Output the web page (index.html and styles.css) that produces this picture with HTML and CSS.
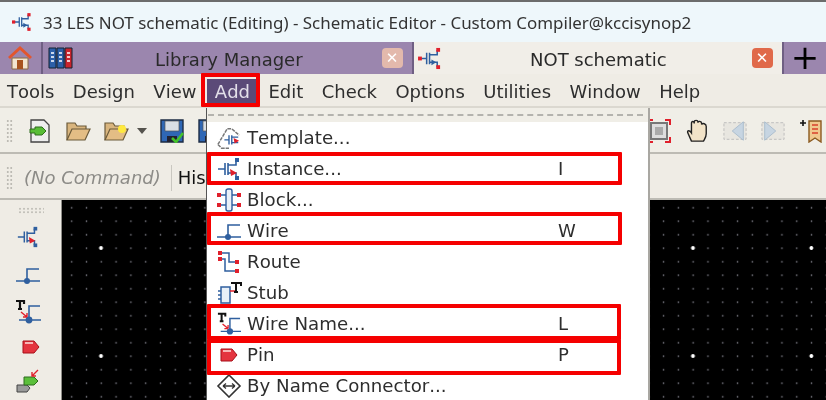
FILE: index.html
```html
<!DOCTYPE html>
<html lang="en">
<head>
<meta charset="utf-8">
<title>Schematic Editor</title>
<link rel="stylesheet" href="styles.css">
</head>
<body>
<svg class="defs" width="0" height="0" aria-hidden="true">
  <symbol id="inst" viewBox="0 0 26 24">
    <path d="M2 12H9M9 6V18M12 6V18M12 8H20V3M12 16H20V21" fill="none" stroke="#2f5f9f" stroke-width="1.6"/>
    <path d="M14 13l5 3-5 3z" fill="#2f5f9f"/>
    <rect x="0" y="10" width="4" height="4" fill="#e0202c"/><rect x="19" y="1" width="4" height="4" fill="#e0202c"/><rect x="19" y="19" width="4" height="4" fill="#e0202c"/>
  </symbol>
  <symbol id="inst2" viewBox="0 0 26 24">
    <path d="M2 12H9M9 6V18M12 6V18M12 8H20V3M12 16H20V21" fill="none" stroke="#2f5f9f" stroke-width="1.6"/>
    <path d="M14 12l7 4-6 3z" fill="#e0202c"/>
    <rect x="19" y="1" width="4" height="4" fill="#2f5f9f"/><rect x="19" y="19" width="4" height="4" fill="#2f5f9f"/>
  </symbol>
  <symbol id="wire" viewBox="0 0 26 20">
    <path d="M1 16H25M12 16V4H24" fill="none" stroke="#2f5f9f" stroke-width="1.6"/>
    <circle cx="12" cy="16" r="3" fill="#2f5f9f"/>
  </symbol>
  <symbol id="wname" viewBox="0 0 26 26">
    <path d="M1 2H9V5M5 2V10M3 10H7" fill="none" stroke="#111" stroke-width="2.2"/>
    <path d="M4 24H26M14 24V10H25" fill="none" stroke="#2f5f9f" stroke-width="1.6" transform="translate(0 -3)"/>
    <circle cx="14" cy="21" r="3.4" fill="#2f5f9f"/>
    <path d="M6 13l6 5M12 18l-4 0M12 18l0-4" fill="none" stroke="#e0202c" stroke-width="1.4"/>
  </symbol>
  <symbol id="pin" viewBox="0 0 18 14">
    <path d="M1 1H12L17 7 12 13H1z" fill="#e4343f" stroke="#a80f18"/>
    <path d="M3 3H11" stroke="#f7b5b5" stroke-width="2"/>
  </symbol>
  <symbol id="conn" viewBox="0 0 26 26">
    <path d="M8 17H18L21 20 18 24H8z" fill="#9a9a9a" stroke="#444" transform="translate(-6 -1)"/>
    <path d="M9 8H19L23 12 19 16H9z" fill="#5bbf3a" stroke="#2f6d1e"/>
    <path d="M23 1L17 7M17 3V7H21" fill="none" stroke="#e0202c" stroke-width="1.4"/>
  </symbol>
  <symbol id="tmpl" viewBox="0 0 28 26">
    <path d="M2 20L12 3 17 3 25 10M2 20L6 24H14" fill="none" stroke="#777" stroke-width="1.6" stroke-dasharray="4 1"/>
    <path d="M9 15H14M14 10V20M17 10V20M17 12H24M17 18H24" fill="none" stroke="#2f5f9f" stroke-width="1.5"/>
    <path d="M19 13l6 3-5 3z" fill="#e0202c"/>
  </symbol>
  <symbol id="block" viewBox="0 0 26 24">
    <rect x="10" y="1" width="6" height="22" rx="2" fill="#eaf1f8" stroke="#2f5f9f" stroke-width="1.4"/>
    <path d="M3 7H10M3 17H10M16 7H23M16 17H23" stroke="#2f5f9f" stroke-width="1.4"/>
    <path d="M1 5h4v4H1zM1 15h4v4H1zM21 5h4v4h-4zM21 15h4v4h-4z" fill="#e0202c"/>
  </symbol>
  <symbol id="route" viewBox="0 0 24 24">
    <path d="M3 3H12V12H20M3 9H8V21H20" fill="none" stroke="#2f5f9f" stroke-width="1.5"/>
    <path d="M1 1h4v4H1zM1 7h4v4H1zM18 10h4v4h-4zM18 19h4v4h-4z" fill="#e0202c"/>
  </symbol>
  <symbol id="stub" viewBox="0 0 26 24">
    <rect x="5" y="6" width="9" height="16" fill="#e8f0f8" stroke="#2f5f9f" stroke-width="1.5"/>
    <path d="M2 10H5M2 14H5M2 18H5" stroke="#2f5f9f" stroke-width="1.5"/>
    <path d="M14 10H20" stroke="#e0202c" stroke-width="1.5"/>
    <path d="M15 2H25V5M20 2V11M18 11H22" fill="none" stroke="#111" stroke-width="2"/>
  </symbol>
  <symbol id="byname" viewBox="0 0 24 24">
    <path d="M12 1L23 12 12 23 1 12z" fill="#fff" stroke="#333" stroke-width="1.6"/>
    <path d="M6 12H18M6 12l3-2.5M6 12l3 2.5M18 12l-3-2.5M18 12l-3 2.5" fill="none" stroke="#333" stroke-width="1.3"/>
  </symbol>
  <symbol id="folder" viewBox="0 0 26 22">
    <path d="M2 20V3H10L12 6H21V9" fill="#d9b57e" stroke="#6b5a3a" stroke-width="1.2"/>
    <path d="M2 20L7 9H25L20 20z" fill="#e3bd85" stroke="#6b5a3a" stroke-width="1.2"/>
  </symbol>
  <symbol id="floppy" viewBox="0 0 24 24">
    <path d="M1 1H23V23H1z" fill="#2f67b5" stroke="#1d2c44" stroke-width="1.4"/>
    <path d="M5 2H19V12H5z" fill="#d9dfe6" stroke="#555" stroke-width=".7"/>
    <path d="M7 17H17V23H7z" fill="#223"/>
  </symbol>
</svg>

<div class="app">
  <header class="titlebar">
    <svg class="ti-title"><use href="#inst"/></svg>
    <span class="title-text">33 LES NOT schematic (Editing) - Schematic Editor - Custom Compiler@kccisynop2</span>
  </header>

  <nav class="tabs">
    <div class="tab-home">
      <svg class="home-ico" viewBox="0 0 24 24">
        <path d="M1 12L12 2 23 12" fill="none" stroke="#e2562e" stroke-width="3"/>
        <path d="M4 12H20V23H4z" fill="#f3e6cf" stroke="#8b6b45"/>
        <path d="M9 14H15V23H9z" fill="#a8541f"/>
      </svg>
    </div>
    <div class="tab-lib">
      <svg class="lib-ico" viewBox="0 0 26 22">
        <path d="M1 1H8V21H1z" fill="#2c5fa8" stroke="#123"/>
        <path d="M9 1H16V21H9z" fill="#2c5fa8" stroke="#123"/>
        <path d="M17 1H24V21H17z" fill="#c9242c" stroke="#123"/>
        <path d="M3 6H6M3 10H6M3 14H6M11 6H14M11 10H14M11 14H14M19 6H22M19 10H22M19 14H22" stroke="#fff" stroke-width="1.3"/>
      </svg>
      <span class="tab-label lib-label">Library Manager</span>
      <span class="tab-close close-dim">✕</span>
    </div>
    <div class="tab-sch">
      <svg class="ti-tab"><use href="#inst"/></svg>
      <span class="tab-label sch-label">NOT schematic</span>
      <span class="tab-close close-on">✕</span>
    </div>
    <div class="tab-plus">+</div>
  </nav>

  <div class="menubar">
    <span>Tools</span><span>Design</span><span>View</span><span class="active">Add</span><span>Edit</span><span>Check</span><span>Options</span><span>Utilities</span><span>Window</span><span>Help</span>
  </div>

  <div class="toolbar">
    <div class="grip"></div>
    <svg class="tool t-doc" viewBox="0 0 22 24">
      <path d="M2 1H15L20 6V23H2z" fill="#eee" stroke="#444" stroke-width="1.3"/>
      <path d="M1 10H6V8H13L17 12 13 16H6V14H1z" fill="#58bd37" stroke="#2f6d1e"/>
    </svg>
    <svg class="tool t-fold"><use href="#folder"/></svg>
    <svg class="tool t-fold2" viewBox="0 0 26 22">
      <use href="#folder"/>
      <circle cx="19" cy="9" r="4" fill="#ffe93f"/>
    </svg>
    <span class="caret"></span>
    <svg class="tool t-flop" viewBox="0 0 24 24">
      <use href="#floppy"/>
      <path d="M12 19l4 4 7-9" fill="none" stroke="#44c22b" stroke-width="2.6"/>
    </svg>
    <svg class="tool t-flop2"><use href="#floppy"/></svg>
    <div class="tool-right">
      <svg class="tool" viewBox="0 0 24 24">
        <path d="M4 4H20V20H4z" fill="#ddd" stroke="#777" stroke-width="2"/>
        <path d="M8 8H16V16H8z" fill="#aaa"/>
        <path d="M1 6V1H6M18 1H23V6M23 18V23H18M6 23H1V18" fill="none" stroke="#e0202c" stroke-width="2"/>
      </svg>
      <svg class="tool" viewBox="0 0 26 26">
        <path d="M7 24L3 15C2 12 5 12 7 15V5C7 2 10 2 10 5V3C10 1 14 1 14 3V4C14 2 18 2 18 5V6C19 4 23 5 23 8V16C23 20 21 22 20 24z" fill="#f2e3c8" stroke="#222" stroke-width="1.5"/>
      </svg>
      <svg class="tool" viewBox="0 0 26 22">
        <path d="M1 2H25V20H1z" fill="#e8e6e0" stroke="#bbb" stroke-dasharray="3 2"/>
        <path d="M22 1V21L10 11z" fill="#c7d5e2" stroke="#a9bccc"/>
      </svg>
      <svg class="tool" viewBox="0 0 26 22">
        <path d="M1 2H25V20H1z" fill="#e8e6e0" stroke="#bbb" stroke-dasharray="3 2"/>
        <path d="M4 1V21L16 11z" fill="#c7d5e2" stroke="#a9bccc"/>
      </svg>
      <svg class="tool" viewBox="0 0 24 24">
        <path d="M1 4H7M4 1V7" stroke="#111" stroke-width="1.6"/>
        <path d="M10 2H22V23L16 19 10 23z" fill="#f0c88e" stroke="#8a5a20" stroke-width="1.4"/>
        <path d="M13 6H19M13 10H19M13 14H19" stroke="#d8402c" stroke-width="1.6"/>
      </svg>
    </div>
  </div>

  <div class="cmdbar">
    <div class="grip"></div>
    <span class="cmd">(No Command)</span>
    <span class="cmd-sep"></span>
    <span class="hist">History</span>
  </div>

  <main class="work">
    <aside class="side">
      <div class="grip-h"></div>
      <svg class="s-inst"><use href="#inst2"/></svg>
      <svg class="s-wire"><use href="#wire"/></svg>
      <svg class="s-name"><use href="#wname"/></svg>
      <svg class="s-pin"><use href="#pin"/></svg>
      <svg class="s-conn"><use href="#conn"/></svg>
    </aside>
    <div class="canvas"></div>
  </main>

  <div class="dropdown">
    <div class="tearoff"></div>
    <div class="item"><svg class="mi"><use href="#tmpl"/></svg><span class="label">Template...</span></div>
    <div class="item"><svg class="mi"><use href="#inst2"/></svg><span class="label">Instance...</span><span class="key">I</span></div>
    <div class="item"><svg class="mi"><use href="#block"/></svg><span class="label">Block...</span></div>
    <div class="item"><svg class="mi"><use href="#wire"/></svg><span class="label">Wire</span><span class="key">W</span></div>
    <div class="item"><svg class="mi"><use href="#route"/></svg><span class="label">Route</span></div>
    <div class="item"><svg class="mi"><use href="#stub"/></svg><span class="label">Stub</span></div>
    <div class="item"><svg class="mi"><use href="#wname"/></svg><span class="label">Wire Name...</span><span class="key">L</span></div>
    <div class="item"><svg class="mi mi-pin"><use href="#pin"/></svg><span class="label">Pin</span><span class="key">P</span></div>
    <div class="item"><svg class="mi"><use href="#byname"/></svg><span class="label">By Name Connector...</span></div>
  </div>

  <div class="mark m-add"></div>
  <div class="mark m-inst"></div>
  <div class="mark m-wire"></div>
  <div class="mark m-name"></div>
  <div class="mark m-pin"></div>
</div>
</body>
</html>
```

FILE: styles.css
```css
* { box-sizing: border-box; }
html, body { margin: 0; padding: 0; background: #000; }
.defs { position: absolute; }
svg { display: block; flex: none; }

.app {
  position: relative;
  width: 826px;
  height: 400px;
  overflow: hidden;
  display: flex;
  flex-direction: column;
  font-family: "DejaVu Sans", sans-serif;
  font-size: 18px;
  font-kerning: none;
  color: #2e2e2e;
  filter: blur(0.35px);
}

/* window title */
.titlebar {
  height: 42px;
  flex: none;
  display: flex;
  align-items: center;
  padding-left: 12px;
  background: #eef7fb;
  border-top: 2px solid #6c6c6c;
}
.ti-title { width: 21px; height: 20px; margin-right: 10px; }
.title-text { font-family: "Noto Sans", sans-serif; font-size: 16.95px; font-kerning: normal; color: #333; white-space: nowrap; }

/* tabs */
.tabs { height: 32px; flex: none; display: flex; background: #f1eee8; }
.tab-home {
  width: 43px;
  background: #9b86ae;
  border-right: 2px solid #6f5f83;
  display: flex;
  align-items: center;
  padding-left: 8px;
}
.home-ico { width: 24px; height: 24px; }
.tab-lib {
  width: 371px;
  background: #9b86ae;
  border-right: 2px solid #6f5f83;
  display: flex;
  align-items: center;
  padding-left: 5px;
}
.lib-ico { width: 26px; height: 22px; }
.tab-label { white-space: nowrap; color: #2a2a2a; padding-top: 2px; }
.lib-label { margin-left: 81px; }
.tab-close {
  width: 21px;
  height: 20px;
  border-radius: 4px;
  display: flex;
  align-items: center;
  justify-content: center;
  color: #fff;
  font-size: 15px;
  font-weight: bold;
  font-family: "DejaVu Sans", sans-serif;
}
.close-dim { background: #e3b9ac; margin-left: 79px; }
.tab-sch {
  width: 368px;
  display: flex;
  align-items: center;
  padding-left: 4px;
}
.ti-tab { width: 25px; height: 23px; }
.sch-label { margin-left: 87px; }
.close-on { background: #e0694a; margin-left: 85px; }
.tab-plus {
  flex: 1;
  background: #9b86ae;
  border-left: 2px solid #6f5f83;
  color: #000;
  font-size: 34px;
  line-height: 30px;
  text-align: center;
}

/* menu bar */
.menubar {
  height: 34px;
  flex: none;
  display: flex;
  gap: 18.4px;
  align-items: center;
  padding: 3px 0 0 7px;
  background: #efece5;
  border-bottom: 2px solid #dbd8d0;
  white-space: nowrap;
}
.menubar .active { color: #e4e0ea; background: #5b4a78; margin: 0 -8px; padding: 2px 8px 3px; }

/* tool bars */
.toolbar {
  height: 46px;
  flex: none;
  display: flex;
  align-items: center;
  padding: 1px 0 0 6px;
  background: #f0eee7;
  border-bottom: 2px solid #bdbbb4;
}
.grip {
  width: 7px;
  height: 24px;
  background-image: radial-gradient(circle, #bdbbb4 1px, transparent 1.2px);
  background-size: 3.5px 4px;
}
.tool { width: 24px; height: 24px; }
.t-doc { margin-left: 15px; }
.t-fold { width: 26px; height: 22px; margin-left: 13px; }
.t-fold2 { width: 26px; height: 22px; margin-left: 12px; }
.caret {
  margin-left: 8px;
  border-left: 5px solid transparent;
  border-right: 5px solid transparent;
  border-top: 6px solid #55534e;
}
.t-flop { margin-left: 13px; }
.t-flop2 { margin-left: 14px; }
.tool-right {
  margin-left: auto;
  margin-right: 3px;
  display: flex;
  align-items: center;
  gap: 14px;
}

.cmdbar {
  height: 46px;
  flex: none;
  display: flex;
  align-items: center;
  padding: 3px 0 0 6px;
  background: #efece5;
  border-bottom: 2px solid #bdbbb4;
  white-space: nowrap;
}
.cmd { margin-left: 11px; font-style: italic; color: #8c8b87; }
.cmd-sep { width: 1px; height: 26px; margin: 0 6px 0 10px; background: #c9c7c0; }
.hist { color: #111; }

/* work area */
.work { flex: 1; display: flex; min-height: 0; }
.side {
  width: 62px;
  flex: none;
  background: #efece5;
  border-right: 1px solid #8f8d88;
  display: flex;
  flex-direction: column;
  align-items: center;
}
.grip-h {
  width: 26px;
  height: 7px;
  margin-top: 7px;
  background-image: radial-gradient(circle, #c4c2bb 1px, transparent 1.2px);
  background-size: 4px 3.5px;
}
.s-inst { width: 24px; height: 24px; margin-top: 11px; margin-left: -6px; }
.s-wire { width: 26px; height: 20px; margin-top: 16px; margin-left: -6px; }
.s-name { width: 26px; height: 26px; margin-top: 14px; margin-left: -5px; }
.s-pin { width: 18px; height: 14px; margin-top: 15px; }
.s-conn { width: 26px; height: 26px; margin-top: 15px; margin-left: -6px; }
.canvas {
  flex: 1;
  background-color: #000;
  background-image:
    radial-gradient(circle, #fff 1.5px, transparent 2.3px),
    radial-gradient(circle, #62626a 0.7px, transparent 1.2px);
  background-size: 118.4px 108px, 14.8px 13.5px;
  background-position: -20.2px -6px, 2.3px 1px;
}

/* dropdown */
.dropdown {
  position: absolute;
  left: 206px;
  top: 108px;
  width: 444px;
  height: 292px;
  background: #fff;
  border-left: 1px solid #555;
  border-right: 2px solid #a9a7a2;
}
.tearoff {
  height: 14px;
  background: #f0eee7;
  padding: 6px 5px 0 1px;
}
.tearoff::before {
  content: "";
  display: block;
  border-top: 2px dashed #b4b3ae;
}
.item { height: 31px; display: flex; align-items: center; padding-left: 9px; white-space: nowrap; }
.mi { width: 26px; height: 24px; }
.mi-pin { width: 18px; height: 14px; margin: 0 4px 0 4px; }
.label { margin-left: 5px; width: 311px; font-size: 18.2px; }

/* red annotations */
.mark { position: absolute; border: 4px solid #f50000; border-radius: 1px; }
.m-add { left: 201px; top: 73px; width: 59px; height: 34px; }
.m-inst { left: 207px; top: 152px; width: 415px; height: 33px; }
.m-wire { left: 207px; top: 212px; width: 415px; height: 33px; }
.m-name { left: 207px; top: 304px; width: 414px; height: 36px; }
.m-pin { left: 207px; top: 339px; width: 414px; height: 36px; }
```
